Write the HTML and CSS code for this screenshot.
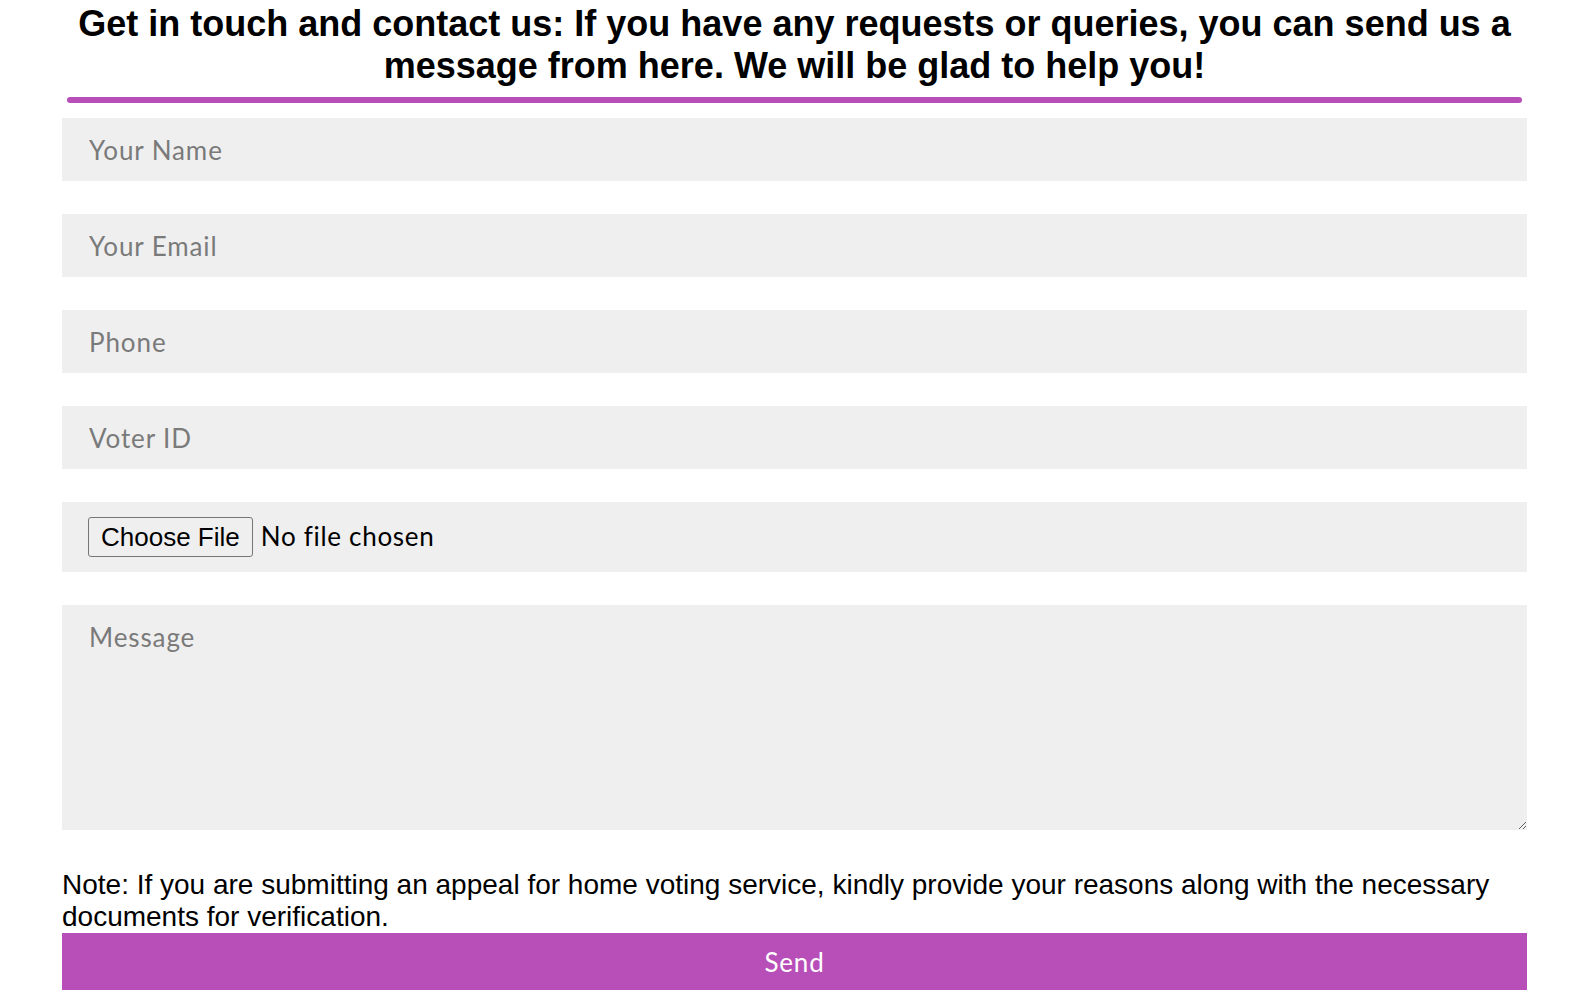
FILE: index.html
```html
<!DOCTYPE html>
<html lang="en">
<head>
<meta charset="utf-8">
<title>Contact us</title>
<link rel="stylesheet" href="styles.css">
</head>
<body>
<div class="page">
  <header class="intro">
    <h2 class="title">Get in touch and contact us: If you have any requests or queries, you can send us a message from here. We will be glad to help you!</h2>
    <div class="rule"></div>
  </header>
  <form class="form">
    <input class="field" type="text" placeholder="Your Name">
    <input class="field" type="email" placeholder="Your Email">
    <input class="field" type="tel" placeholder="Phone">
    <input class="field" type="text" placeholder="Voter ID">
    <input class="field file" type="file">
    <textarea class="field message" placeholder="Message"></textarea>
    <p class="note">Note: If you are submitting an appeal for home voting service, kindly provide your reasons along with the necessary documents for verification.</p>
    <button class="send" type="button">Send</button>
  </form>
</div>
</body>
</html>
```
FILE: styles.css
```css
html, body {
  margin: 0;
  padding: 0;
  background: #ffffff;
}

.page {
  padding: 3px 58px 0 62px;
  font-family: "Liberation Sans", Arial, sans-serif;
}

.intro {
  padding: 0 5px;
}

.title {
  margin: 0;
  font-size: 36px;
  line-height: 41.5px;
  font-weight: bold;
  text-align: center;
  color: #000;
}

.rule {
  height: 6px;
  margin-top: 11px;
  border-radius: 3px;
  background: #b84fb8;
}

.form {
  display: flex;
  flex-direction: column;
  margin-top: 15px;
}

.field {
  box-sizing: border-box;
  width: 100%;
  height: 63px;
  margin: 0 0 33px 0;
  padding: 0 26px 0 27px;
  border: none;
  outline: none;
  background: #efefef;
  font-family: Lato, "Noto Sans", sans-serif;
  font-size: 26px;
  letter-spacing: 0.9px;
  color: #000;
}

.field::placeholder {
  color: #7a7a7a;
}

.file {
  height: 70px;
  padding-top: 15px;
  padding-bottom: 15px;
  padding-left: 26px;
  letter-spacing: 0.7px;
}

.file::file-selector-button {
  font-family: "Liberation Sans", Arial, sans-serif;
  font-size: 26px;
  line-height: 30px;
  letter-spacing: 0;
  padding: 4px 12px;
  margin-right: 8px;
  border: 1px solid #767676;
  border-radius: 3px;
  background: #efefef;
  color: #000;
}

.message {
  height: 225px;
  padding-top: 16px;
  padding-bottom: 14px;
  margin-bottom: 0;
  resize: vertical;
}

.note {
  margin: 39px 0 0 0;
  font-size: 28px;
  line-height: 31.5px;
  color: #000;
}

.send {
  height: 57px;
  margin: 1px 0 0 0;
  border: none;
  background: #b84fb8;
  color: #ffffff;
  font-family: Lato, "Noto Sans", sans-serif;
  font-size: 26px;
  letter-spacing: 0.8px;
  cursor: pointer;
}
```
